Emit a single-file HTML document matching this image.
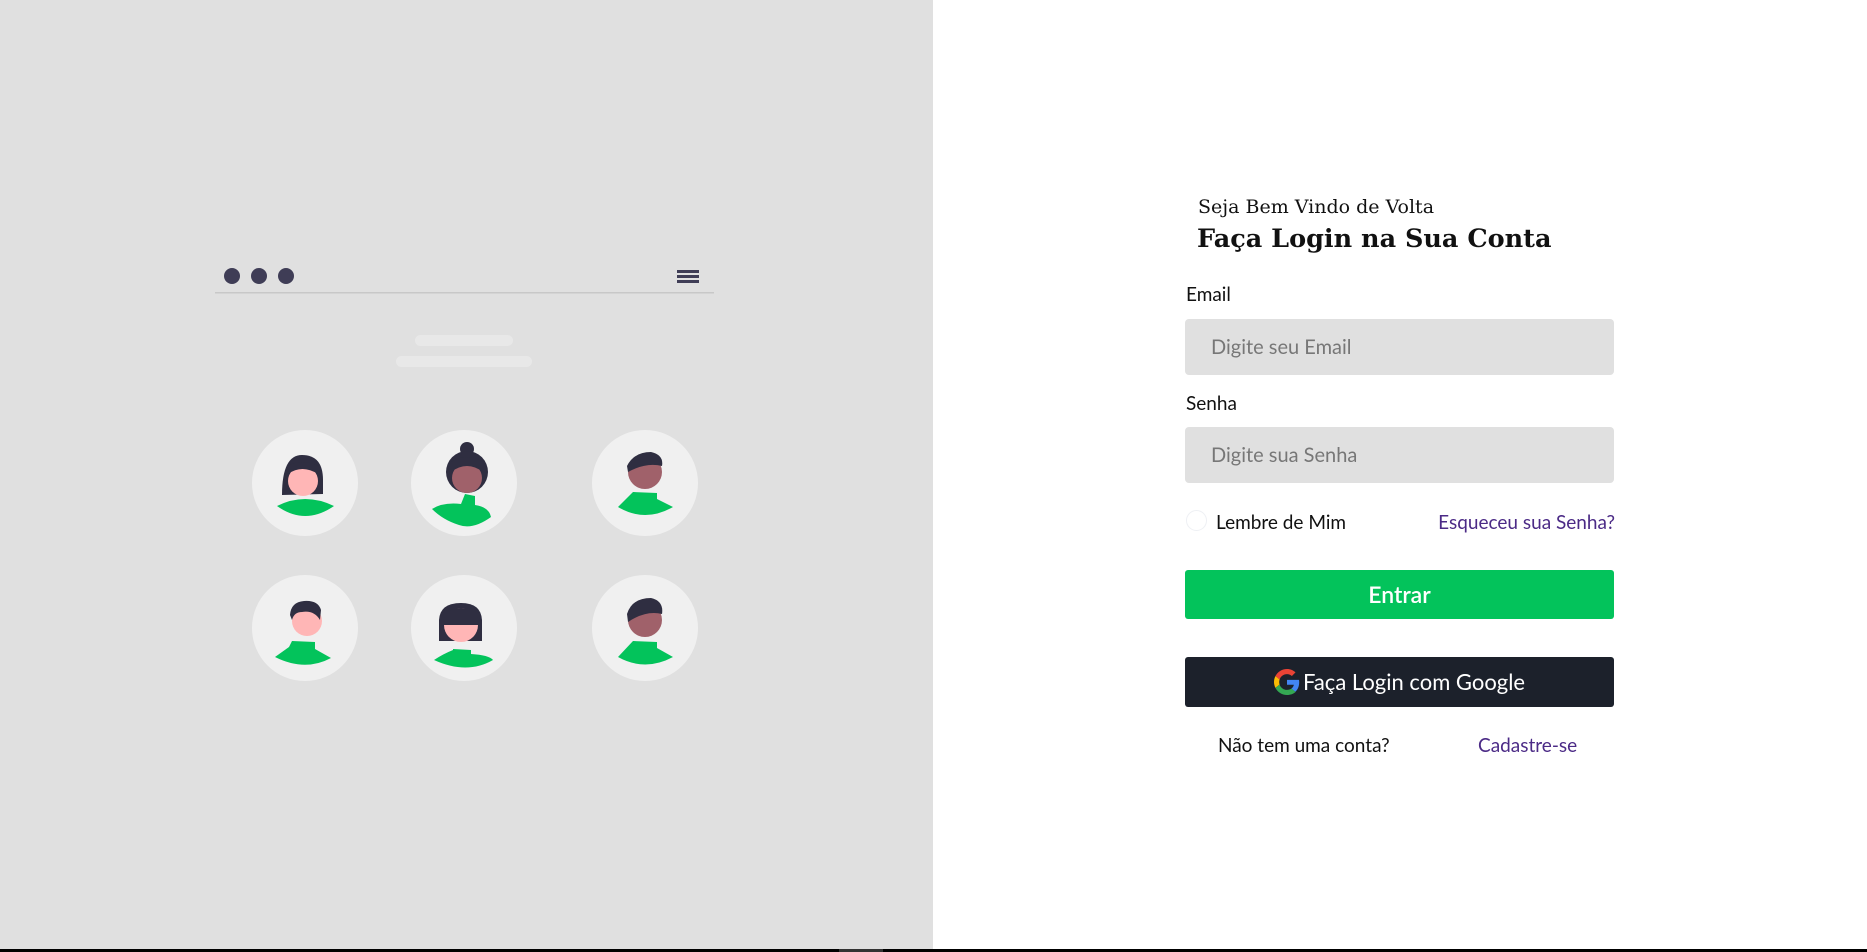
<!DOCTYPE html>
<html><head><meta charset="utf-8"><style>
*{margin:0;padding:0;box-sizing:border-box}
body{width:1867px;height:952px;position:relative;background:#fff;font-family:"Lato","Liberation Sans",sans-serif;overflow:hidden}
.left{position:absolute;left:0;top:0;width:933px;height:949px;background:#e0e0e0}
.bot{position:absolute;left:0;top:949px;width:1867px;height:3px;background:#000}
.t{position:absolute;white-space:nowrap;line-height:23px}
.serif{font-family:"DejaVu Serif","Liberation Serif",serif}
.inp{position:absolute;left:1185px;width:429px;height:56px;background:#e0e0e0;border-radius:4px;color:#777;font-size:20px;padding-left:26px;line-height:56px}
.btn{position:absolute;left:1185px;width:429px;border-radius:3px;color:#fff;font-size:23px;text-align:center}
.purple{color:#4b2a86}
</style></head><body>
<div class="left">
<svg width="933" height="949" viewBox="0 0 933 949" style="position:absolute;left:0;top:0">
<circle cx="232" cy="276" r="8" fill="#3f3d56"/><circle cx="259" cy="276" r="8" fill="#3f3d56"/><circle cx="286" cy="276" r="8" fill="#3f3d56"/>
<rect x="677" y="270" width="22" height="3" fill="#3f3d56"/><rect x="677" y="275" width="22" height="3" fill="#3f3d56"/><rect x="677" y="280" width="22" height="3" fill="#3f3d56"/>
<rect x="215" y="292" width="499" height="1.5" fill="#c8c8c8"/>
<rect x="415" y="335" width="98" height="11" rx="5.5" fill="#e8e8e8"/>
<rect x="396" y="356" width="136" height="11" rx="5.5" fill="#e8e8e8"/>
<g fill="#f0f0f0">
<circle cx="305" cy="483" r="53"/><circle cx="464" cy="483" r="53"/><circle cx="645" cy="483" r="53"/>
<circle cx="305" cy="628" r="53"/><circle cx="464" cy="628" r="53"/><circle cx="645" cy="628" r="53"/>
</g>
<g transform="translate(2,0)">
<path d="M280 495 Q280 455 300 455 Q321 455 321 480 L321 494 Z" fill="#2f2e41"/>
<circle cx="301" cy="481" r="15" fill="#ffb6b6"/>
<path d="M286 474 Q300 464 316 474 L316 466 Q300 458 286 466Z" fill="#2f2e41"/>
<path d="M275 506 Q303 492 332 506 Q303 526 275 506Z" fill="#03c35b"/>
<path d="M287 647 L290 641 L313 642 L313 649 L329 658 Q303 672 273 657 Z" fill="#03c35b"/>
<circle cx="305" cy="621" r="15" fill="#ffb6b6"/>
<path d="M288 615 Q289 602 302 601 Q316 600 319 610 L318 620 Q312 610 300 612 Q292 612 290 620Z" fill="#2f2e41"/>
</g>
<g transform="translate(3,0)">
<circle cx="464" cy="449" r="7" fill="#2f2e41"/>
<circle cx="464" cy="472" r="21" fill="#2f2e41"/>
<circle cx="464" cy="478" r="15" fill="#a0616a"/>
<path d="M448 472 Q464 460 480 472 L480 462 Q464 452 448 462Z" fill="#2f2e41"/>
<path d="M462 494 L472 496 L472 505 Q486 507 488 517 Q470 530 456 525 Q440 520 429 509 Q440 502 458 504Z" fill="#03c35b"/>
<path d="M436 641 L436 620 Q437 603 458 603 Q478 603 479 620 L479 641Z" fill="#2f2e41"/>
<circle cx="458" cy="625" r="17" fill="#ffb6b6"/>
<path d="M440 625 Q440 608 458 608 Q476 608 476 625Z" fill="#2f2e41"/>
<path d="M450 649 L468 650 L468 654 Q486 655 490 660 Q464 675 431 660 Q440 654 450 650Z" fill="#03c35b"/>
</g>
<g transform="translate(6,0)">
<circle cx="639" cy="472" r="17" fill="#a0616a"/>
<path d="M621 466 Q628 452 645 452 Q658 455 656 466 Q640 462 622 472Z" fill="#2f2e41"/>
<path d="M627 492 L651 493 L651 499 L667 507 Q639 523 612 507 Z" fill="#03c35b"/>
<circle cx="639" cy="620" r="17" fill="#a0616a"/>
<path d="M621 614 Q626 598 645 598 Q658 601 656 614 Q640 610 622 622Z" fill="#2f2e41"/>
<path d="M627 641 L651 642 L651 648 L667 657 Q639 672 612 657 Z" fill="#03c35b"/>
</g>
</svg>
</div>
<div class="bot"></div>
<div style="position:absolute;left:839px;top:949px;width:44px;height:3px;background:#333"></div>

<div class="t serif" style="left:1198px;top:196px;font-size:19px;color:#111">Seja Bem Vindo de Volta</div>
<div class="t serif" style="left:1197px;top:224px;font-size:25.5px;line-height:30px;font-weight:bold;color:#111">Faça Login na Sua Conta</div>
<div class="t" style="left:1186px;top:283px;font-size:19px;color:#111">Email</div>
<div class="inp" style="top:319px">Digite seu Email</div>
<div class="t" style="left:1186px;top:392px;font-size:19px;color:#111">Senha</div>
<div class="inp" style="top:427px">Digite sua Senha</div>
<div style="position:absolute;left:1186px;top:510px;width:21px;height:21px;border-radius:50%;background:#fff;border:1px solid #eef0f4"></div>
<div class="t" style="left:1216px;top:511px;font-size:19px;color:#111">Lembre de Mim</div>
<div class="t purple" style="right:252px;top:511px;font-size:19px">Esqueceu sua Senha?</div>
<div class="btn" style="top:570px;height:49px;line-height:49px;background:#03c35b;font-weight:600">Entrar</div>
<div class="btn" style="top:657px;height:50px;line-height:50px;background:#1c212b;font-size:22px">
<svg width="26" height="26" viewBox="0 0 48 48" style="vertical-align:-5px;margin-right:3px">
<path fill="#EA4335" d="M24 9.5c3.5 0 6.6 1.2 9 3.5l6.7-6.7C35.6 2.4 30.2 0 24 0 14.6 0 6.6 5.4 2.6 13.2l7.8 6.1C12.3 13.6 17.7 9.5 24 9.5z"/>
<path fill="#4285F4" d="M46.5 24.5c0-1.6-.1-3.1-.4-4.5H24v9h12.7c-.6 3-2.3 5.5-4.8 7.2l7.6 5.9c4.4-4.1 7-10.1 7-17.6z"/>
<path fill="#FBBC05" d="M10.4 28.7c-.5-1.4-.8-3-.8-4.7s.3-3.2.8-4.7l-7.8-6.1C1 16.5 0 20.1 0 24s1 7.5 2.6 10.8l7.8-6.1z"/>
<path fill="#34A853" d="M24 48c6.5 0 11.9-2.1 15.9-5.8l-7.6-5.9c-2.1 1.4-4.9 2.3-8.3 2.3-6.3 0-11.7-4.1-13.6-9.8l-7.8 6.1C6.6 42.6 14.6 48 24 48z"/>
</svg>Faça Login com Google</div>
<div class="t" style="left:1218px;top:734px;font-size:19px;color:#111">Não tem uma conta?</div>
<div class="t purple" style="left:1478px;top:734px;font-size:19px">Cadastre-se</div>
</body></html>
